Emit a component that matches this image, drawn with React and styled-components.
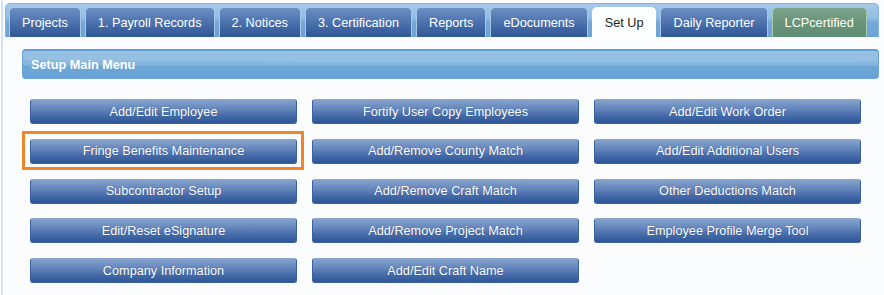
import React from "react";
import styled, { createGlobalStyle } from "styled-components";

const tabs = [
  { label: "Projects" },
  { label: "1. Payroll Records" },
  { label: "2. Notices" },
  { label: "3. Certification" },
  { label: "Reports" },
  { label: "eDocuments" },
  { label: "Set Up", active: true },
  { label: "Daily Reporter" },
  { label: "LCPcertified", green: true },
];

const menuItems = [
  "Add/Edit Employee",
  "Fringe Benefits Maintenance",
  "Subcontractor Setup",
  "Edit/Reset eSignature",
  "Company Information",
  "Fortify User Copy Employees",
  "Add/Remove County Match",
  "Add/Remove Craft Match",
  "Add/Remove Project Match",
  "Add/Edit Craft Name",
  "Add/Edit Work Order",
  "Add/Edit Additional Users",
  "Other Deductions Match",
  "Employee Profile Merge Tool",
];

function App() {
  return (
    <>
      <GlobalStyle />
      <Panel>
        <TabBar>
          {tabs.map((tab) => (
            <Tab key={tab.label} $active={tab.active} $green={tab.green}>
              {tab.label}
            </Tab>
          ))}
        </TabBar>
        <Content>
          <SectionHeader>Setup Main Menu</SectionHeader>
          <MenuGrid>
            {menuItems.map((item) => (
              <MenuButton
                key={item}
                $highlight={item === "Fringe Benefits Maintenance"}
              >
                {item}
              </MenuButton>
            ))}
          </MenuGrid>
        </Content>
      </Panel>
    </>
  );
}

export default App;

const GlobalStyle = createGlobalStyle`
  html, body {
    margin: 0;
    padding: 0;
    background: #ffffff;
  }
  body {
    font-family: "Liberation Sans", Arial, sans-serif;
    width: 884px;
    height: 295px;
    overflow: hidden;
  }
`;

const Panel = styled.div`
  margin-left: 1px;
  border-left: 2px solid #d4e3f3;
  padding: 3px 5px 0 2px;
  height: 292px;
  background: #fbfcfe;
`;

const TabBar = styled.div`
  display: flex;
  gap: 4px;
  height: 30px;
  padding: 3px 3px 0 3px;
  border: 1px solid #86b3dc;
  border-bottom: none;
  border-radius: 5px 5px 0 0;
  background: linear-gradient(#a6c9ea 0%, #8fbbe3 45%, #74a8d8 55%, #6ba2d5 100%);
`;

const Tab = styled.div`
  display: flex;
  align-items: center;
  justify-content: center;
  padding: 0 12px;
  height: 30px;
  box-sizing: border-box;
  border: 1px solid ${(p) => (p.$green ? "#a9c9b4" : p.$active ? "#ffffff" : "#a9c5e4")};
  border-bottom: none;
  border-radius: 5px 5px 0 0;
  font-size: 12.7px;
  white-space: nowrap;
  color: ${(p) => (p.$active ? "#1c1c1c" : "#ffffff")};
  background: ${(p) =>
    p.$active
      ? "#fdfefe"
      : p.$green
      ? "linear-gradient(#7ca58a, #6a957b 50%, #5f8d71)"
      : "linear-gradient(#6d8fc3, #4c72ad 50%, #2e5797)"};
`;

const Content = styled.div`
  padding: 12px 0 0 17px;
  background: #fbfcfe;
`;

const SectionHeader = styled.div`
  display: flex;
  align-items: center;
  height: 30px;
  box-sizing: border-box;
  padding-left: 8px;
  border: 1px solid #6aa4d8;
  border-top: 2px solid #5e9dd6;
  border-radius: 4px;
  font-size: 12.7px;
  font-weight: bold;
  color: #ffffff;
  background:
    radial-gradient(ellipse 160% 58% at 65% 0%, rgba(255, 255, 255, 0.1) 70%, rgba(255, 255, 255, 0) 72%),
    linear-gradient(#8cbbe0 0%, #86b6de 50%, #6ea7d7 56%, #67a2d4 100%);
`;

const MenuGrid = styled.div`
  display: grid;
  grid-auto-flow: column;
  grid-template-rows: repeat(5, 25px);
  grid-template-columns: repeat(3, 267px);
  column-gap: 15px;
  row-gap: 14.75px;
  margin: 20px 0 0 8px;
`;

const MenuButton = styled.div`
  position: relative;
  display: flex;
  align-items: center;
  justify-content: center;
  box-sizing: border-box;
  height: 25px;
  border: 1px solid #3a62a0;
  border-top-color: #8aa6d0;
  border-radius: 3px;
  font-size: 12.7px;
  color: #ffffff;
  text-shadow: 0 0 1px rgba(20, 40, 90, 0.6);
  background: linear-gradient(#86a3cd 0%, #6385bb 40%, #4469a8 70%, #2e5797 100%);

  &::after {
    content: "";
    display: ${(p) => (p.$highlight ? "block" : "none")};
    position: absolute;
    left: -9px;
    right: -8px;
    top: -9px;
    bottom: -7px;
    border: 3px solid #f0862a;
    pointer-events: none;
  }
`;
